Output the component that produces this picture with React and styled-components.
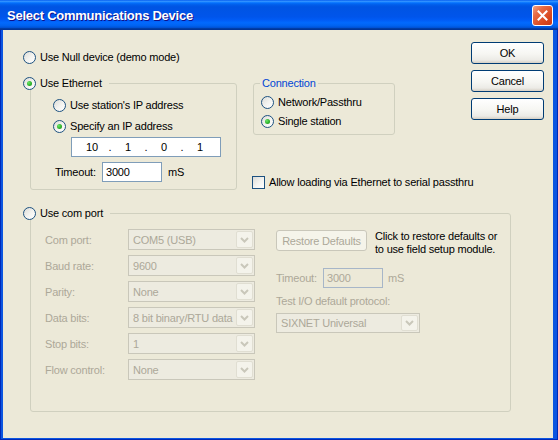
import React from "react";
import styled, { createGlobalStyle } from "styled-components";

const GlobalStyle = createGlobalStyle`
  html, body {
    margin: 0;
    padding: 0;
    background: #ece9d8;
  }
  body {
    font-family: "Liberation Sans", Arial, sans-serif;
    font-size: 11px;
    letter-spacing: -0.2px;
    color: #000;
  }
`;

const Window = styled.div`
  width: 558px;
  height: 440px;
  box-sizing: border-box;
  display: flex;
  flex-direction: column;
  background: #0b55e0;
  box-shadow: inset 1px 0 #0029b8, inset -1px 0 #0029b8, inset 0 -1px #0029b8;
  overflow: hidden;
`;

const TitleBar = styled.div`
  height: 30px;
  flex-shrink: 0;
  display: flex;
  align-items: center;
  justify-content: space-between;
  padding: 0 5px 0 7px;
  background: linear-gradient(
    to bottom,
    #0058ee 0%,
    #3593ff 4%,
    #288eff 6%,
    #127dff 8%,
    #036ffc 10%,
    #0262ee 14%,
    #0057e5 20%,
    #0054e3 24%,
    #0055eb 56%,
    #005bf5 66%,
    #026afe 76%,
    #0062ef 86%,
    #0052d6 92%,
    #0040ab 94%,
    #003092 100%
  );
`;

const Title = styled.span`
  color: #fff;
  font-weight: bold;
  font-size: 13px;
  letter-spacing: -0.25px;
  text-shadow: 1px 1px #0f1089;
  white-space: nowrap;
  padding-top: 1px;
`;

const CloseButton = styled.div`
  width: 21px;
  height: 21px;
  box-sizing: border-box;
  border: 1px solid #fff;
  border-radius: 3px;
  display: flex;
  align-items: center;
  justify-content: center;
  background: linear-gradient(135deg, #f3a384 0%, #e66a44 30%, #d9481f 70%, #c8391a 100%);
`;

const Client = styled.div`
  flex: 1;
  margin: 0 5px 2px 3px;
  background: #ece9d8;
  padding: 12px 9px 0 20px;
  display: flex;
  flex-direction: column;
`;

const TopSection = styled.div`
  display: flex;
  align-items: flex-start;
`;

const LeftCol = styled.div`
  width: 214px;
  flex-shrink: 0;
  padding-top: 9px;
  display: flex;
  flex-direction: column;
`;

const MidCol = styled.div`
  width: 143px;
  flex-shrink: 0;
  margin-left: 15px;
  padding-top: 41px;
  display: flex;
  flex-direction: column;
`;

const ButtonCol = styled.div`
  margin-left: auto;
  display: flex;
  flex-direction: column;
  gap: 6px;
`;

const PushButton = styled.div`
  width: ${(p) => p.$w || 73}px;
  height: ${(p) => p.$h || 22}px;
  box-sizing: border-box;
  border: 1px solid ${(p) => (p.$disabled ? "#c9c7ba" : "#003c74")};
  border-radius: 3px;
  display: flex;
  align-items: center;
  justify-content: center;
  color: ${(p) => (p.$disabled ? "#aca899" : "#000")};
  background: ${(p) =>
    p.$disabled
      ? "#f5f4ea"
      : "linear-gradient(180deg, #ffffff 0%, #f6f6f2 55%, #ecebe6 85%, #d6d0c5 100%)"};
  white-space: nowrap;
  flex-shrink: 0;
`;

const GroupBox = styled.div`
  position: relative;
  box-sizing: border-box;
  width: ${(p) => p.$w}px;
  height: ${(p) => p.$h}px;
  margin-top: ${(p) => p.$mt || 0}px;
  margin-left: ${(p) => p.$ml || 0}px;
  border: 1px solid #d0d0bf;
  border-radius: 3px;
  padding: ${(p) => p.$pad};
  display: flex;
  flex-direction: ${(p) => p.$dir || "column"};
  align-items: flex-start;
  flex-shrink: 0;
`;

const Legend = styled.div`
  position: absolute;
  top: -7px;
  left: ${(p) => p.$left}px;
  height: 13px;
  display: flex;
  align-items: center;
  background: #ece9d8;
  padding: ${(p) => p.$pad || "0 7px 0 0"};
  color: ${(p) => p.$color || "#000"};
  white-space: nowrap;
  line-height: 13px;
`;

const Choice = styled.div`
  display: flex;
  align-items: center;
  gap: 4px;
  height: 13px;
  line-height: 13px;
  white-space: nowrap;
  margin-top: ${(p) => p.$mt || 0}px;
  color: ${(p) => (p.$disabled ? "#aca899" : "#000")};
`;

const RadioDot = styled.span`
  position: relative;
  width: 13px;
  height: 13px;
  box-sizing: border-box;
  border-radius: 50%;
  border: 1px solid #1c5180;
  background: linear-gradient(135deg, #dcdcd7 0%, #f4f4f1 55%, #ffffff 100%);
  flex-shrink: 0;

  &::after {
    content: "";
    display: ${(p) => (p.$checked ? "block" : "none")};
    position: absolute;
    left: 3px;
    top: 3px;
    width: 5px;
    height: 5px;
    border-radius: 50%;
    background: radial-gradient(circle at 35% 35%, #6be768 0%, #2fb32c 55%, #1a8e1a 100%);
  }
`;

const CheckBox = styled.span`
  width: 13px;
  height: 13px;
  box-sizing: border-box;
  border: 1px solid #1c5180;
  background: linear-gradient(135deg, #dcdcd7 0%, #f4f4f1 55%, #ffffff 100%);
  flex-shrink: 0;
`;

const IpBox = styled.div`
  width: 150px;
  height: 20px;
  box-sizing: border-box;
  margin: 4px 0 0 18px;
  border: 1px solid #7f9db9;
  background: #fff;
  display: flex;
  align-items: center;
  padding-left: 5px;
`;

const Octet = styled.span`
  width: ${(p) => (p.$dot ? 6 : 30)}px;
  text-align: center;
`;

const FieldRow = styled.div`
  display: flex;
  align-items: center;
  height: 20px;
  margin: ${(p) => p.$m || 0};
  color: ${(p) => (p.$disabled ? "#aca899" : "#000")};
`;

const FieldLabel = styled.span`
  width: 47px;
  white-space: nowrap;
`;

const TextBox = styled.div`
  width: 60px;
  height: 20px;
  box-sizing: border-box;
  border: 1px solid ${(p) => (p.$disabled ? "#a7b6c8" : "#7f9db9")};
  background: ${(p) => (p.$disabled ? "#ece9d8" : "#fff")};
  color: ${(p) => (p.$disabled ? "#aca899" : "#000")};
  padding-left: 3px;
  line-height: 18px;
`;

const Unit = styled.span`
  margin-left: ${(p) => p.$ml || 6}px;
`;

const ComGrid = styled.div`
  display: grid;
  grid-template-columns: 83px 127px;
  grid-auto-rows: 21px;
  row-gap: 5px;
  align-items: center;
  flex-shrink: 0;
`;

const DimLabel = styled.span`
  color: #aca899;
  white-space: nowrap;
`;

const Combo = styled.div`
  width: ${(p) => p.$w}px;
  height: ${(p) => p.$h || 21}px;
  margin-top: ${(p) => p.$mt || 0}px;
  box-sizing: border-box;
  border: 1px solid #c9c7ba;
  background: #edebe0;
  color: #aca899;
  display: flex;
  align-items: center;
  justify-content: space-between;
  padding: 1px 1px 1px 4px;
  white-space: nowrap;
  overflow: hidden;
`;

const ComboArrow = styled.span`
  width: 17px;
  height: 100%;
  box-sizing: border-box;
  border: 1px solid #e0ded2;
  border-radius: 2px;
  background: #f4f3eb;
  display: flex;
  align-items: center;
  justify-content: center;
  flex-shrink: 0;
`;

const RightCol = styled.div`
  margin-left: 21px;
  padding-top: 1px;
  display: flex;
  flex-direction: column;
  align-items: flex-start;
`;

const RestoreRow = styled.div`
  display: flex;
  align-items: flex-start;
  gap: 8px;
`;

const Hint = styled.div`
  line-height: 13px;
  white-space: nowrap;
`;

const Caption = styled.div`
  margin-top: 6px;
  line-height: 14px;
  color: #aca899;
  white-space: nowrap;
`;

function Chevron() {
  return (
    <svg width="9" height="6" viewBox="0 0 9 6">
      <path d="M1 1 L4.5 4.5 L8 1" fill="none" stroke="#c9c7ba" strokeWidth="2" />
    </svg>
  );
}

function Radio({ checked, disabled, children, mt }) {
  return (
    <Choice $disabled={disabled} $mt={mt}>
      <RadioDot $checked={checked} />
      <span>{children}</span>
    </Choice>
  );
}

function DropDown({ value, w, h, mt }) {
  return (
    <Combo $w={w} $h={h} $mt={mt}>
      <span>{value}</span>
      <ComboArrow>
        <Chevron />
      </ComboArrow>
    </Combo>
  );
}

const comRows = [
  ["Com port:", "COM5 (USB)"],
  ["Baud rate:", "9600"],
  ["Parity:", "None"],
  ["Data bits:", "8 bit binary/RTU data"],
  ["Stop bits:", "1"],
  ["Flow control:", "None"],
];

export default function App() {
  return (
    <>
      <GlobalStyle />
      <Window>
        <TitleBar>
          <Title>Select Communications Device</Title>
          <CloseButton>
            <svg width="11" height="11" viewBox="0 0 11 11">
              <path d="M1.5 1.5 L9.5 9.5 M9.5 1.5 L1.5 9.5" stroke="#fff" strokeWidth="2" strokeLinecap="square" />
            </svg>
          </CloseButton>
        </TitleBar>

        <Client>
          <TopSection>
            <LeftCol>
              <Radio>Use Null device (demo mode)</Radio>

              <GroupBox $w={207} $h={107} $mt={19} $ml={7} $pad="15px 0 0 22px">
                <Legend $left={-8}>
                  <Radio checked>Use Ethernet</Radio>
                </Legend>
                <Radio>Use station's IP address</Radio>
                <Radio checked mt={8}>
                  Specify an IP address
                </Radio>
                <IpBox>
                  <Octet>10</Octet>
                  <Octet $dot>.</Octet>
                  <Octet>1</Octet>
                  <Octet $dot>.</Octet>
                  <Octet>0</Octet>
                  <Octet $dot>.</Octet>
                  <Octet>1</Octet>
                </IpBox>
                <FieldRow $m="5px 0 0 2px">
                  <FieldLabel>Timeout:</FieldLabel>
                  <TextBox>3000</TextBox>
                  <Unit>mS</Unit>
                </FieldRow>
              </GroupBox>
            </LeftCol>

            <MidCol>
              <GroupBox $w={142} $h={52} $ml={1} $pad="12px 0 0 7px">
                <Legend $left={6} $pad="0 2px" $color="#0046d5">
                  Connection
                </Legend>
                <Radio>Network/Passthru</Radio>
                <Radio checked mt={6}>
                  Single station
                </Radio>
              </GroupBox>
              <Choice $mt={41}>
                <CheckBox />
                <span>Allow loading via Ethernet to serial passthru</span>
              </Choice>
            </MidCol>

            <ButtonCol>
              <PushButton>OK</PushButton>
              <PushButton>Cancel</PushButton>
              <PushButton>Help</PushButton>
            </ButtonCol>
          </TopSection>

          <GroupBox $w={481} $h={199} $mt={23} $ml={7} $pad="15px 0 0 14px" $dir="row">
            <Legend $left={-8}>
              <Radio>Use com port</Radio>
            </Legend>

            <ComGrid>
              {comRows.map(([label, value]) => (
                <React.Fragment key={label}>
                  <DimLabel>{label}</DimLabel>
                  <DropDown value={value} w={127} />
                </React.Fragment>
              ))}
            </ComGrid>

            <RightCol>
              <RestoreRow>
                <PushButton $disabled $w={91} $h={21}>
                  Restore Defaults
                </PushButton>
                <Hint>
                  Click to restore defaults or
                  <br />
                  to use field setup module.
                </Hint>
              </RestoreRow>
              <FieldRow $disabled $m="12px 0 0 0">
                <FieldLabel>Timeout:</FieldLabel>
                <TextBox $disabled>3000</TextBox>
                <Unit $ml={5}>mS</Unit>
              </FieldRow>
              <Caption>Test I/O default protocol:</Caption>
              <DropDown value="SIXNET Universal" w={144} h={20} mt={5} />
            </RightCol>
          </GroupBox>
        </Client>
      </Window>
    </>
  );
}
